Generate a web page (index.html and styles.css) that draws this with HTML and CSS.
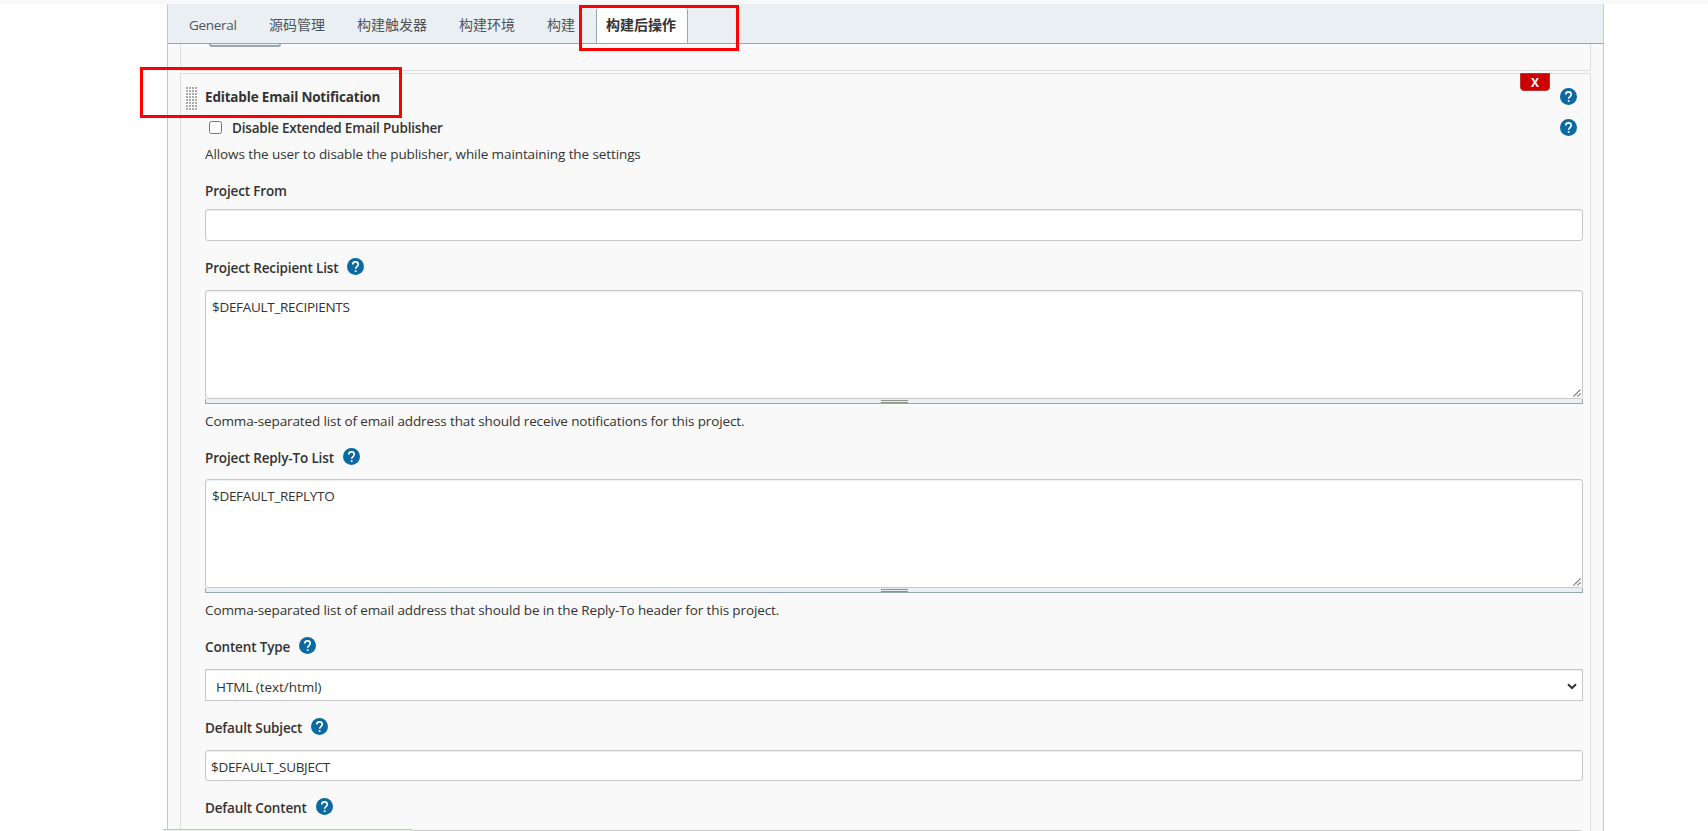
FILE: index.html
```html
<!DOCTYPE html>
<html lang="zh">
<head>
<meta charset="utf-8">
<title>Config</title>
<link rel="stylesheet" href="styles.css">
</head>
<body>
<svg class="defs" width="0" height="0" aria-hidden="true">
  <symbol id="help" viewBox="0 0 24 24"><circle cx="12" cy="12" r="12" fill="#0b6aa2"/><path d="M8.1 9.2a3.9 3.7 0 0 1 7.8 0c0 2.7-3.7 3-3.7 6" fill="none" stroke="#fff" stroke-width="2.3"/><rect x="11" y="17.2" width="2.4" height="2.4" fill="#fff"/></symbol>
  <symbol id="grip" viewBox="0 0 8 8"><path d="M0.5 7.5l7-7M4.5 7.5l3-3" stroke="#555" stroke-width="1.1" stroke-dasharray="1.3 .3" fill="none"/></symbol>
</svg>
<div class="page">
  <div class="topstrip"></div>
  <main class="panel">
    <nav class="tabs">
      <a class="tab general">General</a><a class="tab">源码管理</a><a class="tab">构建触发器</a><a class="tab">构建环境</a><a class="tab last">构建</a><a class="tab active">构建后操作</a>
    </nav>
    <section class="block previous"><div class="prevbutton"></div></section>
    <section class="block email">
      <button class="delete">X</button>
      <div class="row title"><span class="drag"></span><b class="heading">Editable Email Notification</b><svg class="help"><use href="#help"/></svg></div>
      <div class="row check"><input type="checkbox"><span class="label publisher">Disable Extended Email Publisher</span><svg class="help"><use href="#help"/></svg></div>
      <div class="desc allows">Allows the user to disable the publisher, while maintaining the settings</div>
      <div class="row name from"><span class="label">Project From</span></div>
      <div class="field"></div>
      <div class="row name"><span class="label">Project Recipient List</span><svg class="help"><use href="#help"/></svg></div>
      <div class="area"><span class="value">$DEFAULT_RECIPIENTS</span><svg class="grip"><use href="#grip"/></svg></div>
      <div class="handle"><i></i></div>
      <div class="desc recipients">Comma-separated list of email address that should receive notifications for this project.</div>
      <div class="row name reply"><span class="label">Project Reply-To List</span><svg class="help"><use href="#help"/></svg></div>
      <div class="area"><span class="value">$DEFAULT_REPLYTO</span><svg class="grip"><use href="#grip"/></svg></div>
      <div class="handle"><i></i></div>
      <div class="desc replyto">Comma-separated list of email address that should be in the Reply-To header for this project.</div>
      <div class="row name type"><span class="label">Content Type</span><svg class="help"><use href="#help"/></svg></div>
      <div class="field select"><span class="option">HTML (text/html)</span><svg class="chevron" viewBox="0 0 10 7"><path d="M1 1.2l4 3.8 4-3.8" fill="none" stroke="#333" stroke-width="2"/></svg></div>
      <div class="row name subject"><span class="label">Default Subject</span><svg class="help"><use href="#help"/></svg></div>
      <div class="field short"><span class="value">$DEFAULT_SUBJECT</span></div>
      <div class="row name subject"><span class="label">Default Content</span><svg class="help"><use href="#help"/></svg></div>
      <div class="area"></div>
    </section>
  </main>
  <div class="mark mark-title"></div>
  <div class="mark mark-tab"></div>
  <div class="status"></div>
</div>
</body>
</html>
```
FILE: styles.css
```css
* { box-sizing: border-box; }
body { margin: 0; background: #fff; color: #333; font: 13.5px/20px "Open Sans", "Noto Sans", "Noto Sans CJK SC", sans-serif; }
.defs { position: absolute; }
.page { position: relative; height: 831px; overflow: hidden; }
.topstrip { height: 4px; background: #f8f8f8; }
.panel { width: 1437px; height: 900px; margin-left: 167px; border: solid #c7c9cb; border-width: 0 1px; background: #f9f9f9; }
.tabs { display: flex; height: 40px; padding: 4px 0 0 6px; background: #e9eff2; border-bottom: 1px solid #98a6ad; color: #4d545d; }
.tab { font: 14px/33px "Noto Sans CJK SC", sans-serif; height: 35px; padding: 0 16px; white-space: nowrap; }
.general { font: 13.5px/34px "Open Sans", sans-serif; width: 79px; padding-left: 15px; letter-spacing: -.3px; }
.tab.last { padding-right: 0; width: 65px; }
.tab.active { width: 92px; padding: 0 0 0 9px; background: #fff; border: solid #98a6ad; border-width: 0 1px; border-radius: 3px 3px 0 0; color: #333; font-weight: 700; }
.block { width: 1411px; margin-left: 12px; border: 1px solid #dedede; }
.previous { height: 27px; border-top: 0; padding-left: 28px; }
.prevbutton { width: 72px; height: 3px; border: 2px solid #98a6ad; border-top: 0; border-radius: 0 0 4px 4px; background: #eee; }
.email { position: relative; height: 830px; margin-top: 2px; padding: 0 7px 0 24px; }
.delete { position: absolute; top: -1px; right: 40px; width: 30px; height: 18px; padding: 0; border: 1px solid #b33; border-radius: 0 0 4px 4px; background: #c00; color: #fff; font: 700 12px/18px "Open Sans", sans-serif; }
.row { display: flex; align-items: center; }
.help { width: 17px; height: 17px; flex: none; }
.title { height: 44px; margin-left: -19px; }
.drag { width: 12px; height: 24px; margin-right: 7px; margin-top: 5px; background: radial-gradient(circle at 1px 1px, #aaa 0 .9px, #fff 1.2px) 0 0 / 3px 3px; }
.heading { letter-spacing: -.18px; padding-top: 2px; }
.title .help, .check .help { margin: 0 6px 0 auto; }
.check { height: 20px; }
.check .help { margin-top: -2px; }
.check input { width: 13px; height: 13px; margin: 0 10px 0 4px; position: relative; top: -1px; }
.label { font-weight: 600; letter-spacing: -.15px; }
.publisher { letter-spacing: -.2px; }
.desc { height: 20px; letter-spacing: -.12px; white-space: nowrap; }
.allows { margin-top: 6px; letter-spacing: -.1px; }
.name { height: 49px; padding-top: 5px; }
.name .help { margin: -3px 0 0 9px; }
.from { height: 45px; padding-top: 9px; }
.field { height: 32px; border: 1px solid #c6c8ca; border-radius: 3px; background: #fff; box-shadow: inset 0 1px 1px #eee; padding: 6px 5px; }
.area { position: relative; height: 109px; border: 1px solid #c6c8ca; border-radius: 3px; background: #fff; box-shadow: inset 0 1px 1px #eee; padding: 6px; }
.value { display: block; letter-spacing: -.3px; }
.grip { position: absolute; right: 1px; bottom: 1px; width: 8px; height: 8px; }
.handle { height: 5px; border: 1px solid #98a6ad; border-top: 0; background: #e9eff2; display: flex; justify-content: center; }
.handle i { width: 27px; height: 3px; border: solid #8b9289; border-width: 1px 0; margin-top: 1px; }
.recipients, .replyto { margin-top: 7px; }
.reply { height: 48px; }
.type { height: 49px; }
.select { border-radius: 0; display: flex; align-items: center; padding: 2px 5px 0 10px; }
.option { flex: 1; padding-top: 2px; letter-spacing: -.05px; }
.chevron { width: 10px; height: 7px; }
.short { height: 31px; }
.mark { position: absolute; border: 3px solid #f00; }
.mark-title { left: 140px; top: 67px; width: 262px; height: 51px; }
.mark-tab { left: 579px; top: 5px; width: 160px; height: 46px; }
.status { position: absolute; left: 163px; top: 829px; width: 251px; height: 3px; border-top: 1px solid #b3ccc0; border-radius: 0 4px 0 0; background: #e9f2e9; }
```
